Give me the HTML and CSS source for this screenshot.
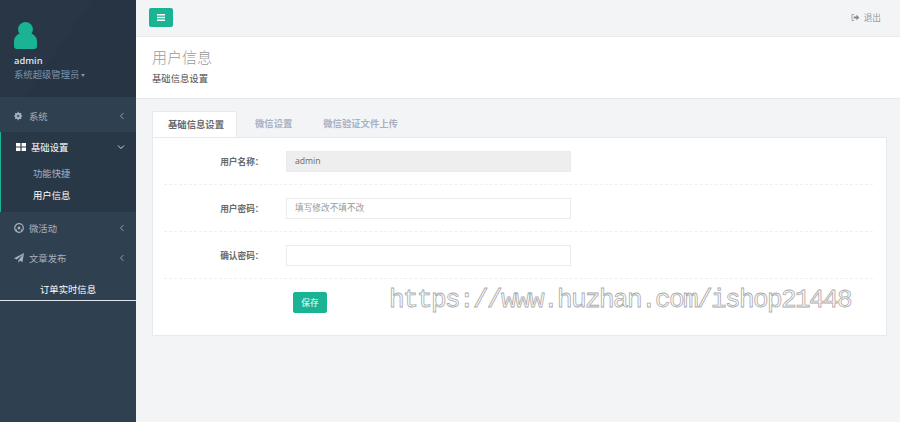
FILE: index.html
```html
<!DOCTYPE html>
<html lang="zh-CN">
<head>
    <meta charset="UTF-8">
    <title>用户信息</title>
    <link rel="stylesheet" href="styles.css">
</head>
<body>
    <div class="layout">
        <!-- 左侧菜单 -->
        <nav class="sidebar">
            <div class="profile">
                <svg class="avatar" viewBox="0 0 23 27" width="23" height="27">
                    <circle cx="11.5" cy="7.400" r="7.400" fill="#1ab394"/>
                    <path d="M0 20c0-4.500 2-7 6-8.500 3 2 8 2 11 0 4 1.500 6 4 6 8.500v4c0 2-1 3-3 3H3c-2 0-3-1-3-3z" fill="#1ab394"/>
                </svg>
                <div class="profile-name">admin</div>
                <div class="profile-role">系统超级管理员<span class="caret"></span></div>
            </div>
            <ul class="menu">
                <li class="menu-item">
                    <svg class="menu-icon" viewBox="0 -1 12 12"><circle cx="5" cy="5" r="2.900" fill="none" stroke="currentColor" stroke-width="2.200"/><path d="M5 0v10M0 5h10M1.500 1.500l7 7M8.500 1.500l-7 7" stroke="currentColor" stroke-width="1.300"/><circle cx="5" cy="5" r="1.300" fill="#2f4050"/></svg>
                    <span class="menu-text">系统</span>
                    <svg class="arrow" viewBox="0 0 6 8"><path d="M4.500 1 1.500 4l3 3" fill="none" stroke="currentColor" stroke-width=".8"/></svg>
                </li>
                <li class="menu-group">
                    <div class="menu-item active">
                        <svg class="menu-icon" viewBox="0 0 10 10"><path d="M0 1h4.400v3.400H0zM5.600 1H10v3.400H5.600zM0 5.600h4.400V9H0zM5.600 5.600H10V9H5.600z" fill="currentColor"/></svg>
                        <span class="menu-text">基础设置</span>
                        <svg class="arrow" viewBox="0 0 8 6"><path d="M1 1.500 4 4.500l3-3" fill="none" stroke="currentColor" stroke-width=".8"/></svg>
                    </div>
                    <a class="sub-item">功能快捷</a>
                    <a class="sub-item current">用户信息</a>
                </li>
                <li class="menu-item">
                    <svg class="menu-icon" viewBox="0 0 10 10"><circle cx="5" cy="5" r="4.300" fill="none" stroke="currentColor" stroke-width="1.200"/><path d="M5 3.300 6.500 4.500 6 6.200H4L3.500 4.500z" fill="currentColor"/><circle cx="2.600" cy="7" r=".8" fill="currentColor"/><circle cx="7.400" cy="7" r=".8" fill="currentColor"/></svg>
                    <span class="menu-text">微活动</span>
                    <svg class="arrow" viewBox="0 0 6 8"><path d="M4.500 1 1.500 4l3 3" fill="none" stroke="currentColor" stroke-width=".8"/></svg>
                </li>
                <li class="menu-item">
                    <svg class="menu-icon" viewBox="0 0 10 10"><path d="M10 0 8.500 9 5.800 7.800 4.300 10V7.500L9 1.500 2.800 6.500 0 5.300z" fill="currentColor"/></svg>
                    <span class="menu-text">文章发布</span>
                    <svg class="arrow" viewBox="0 0 6 8"><path d="M4.500 1 1.500 4l3 3" fill="none" stroke="currentColor" stroke-width=".8"/></svg>
                </li>
                <li class="menu-link">订单实时信息</li>
            </ul>
        </nav>

        <!-- 主体 -->
        <main class="main">
            <div class="topbar">
                <button class="toggle-btn">
                    <svg viewBox="0 0 8 7" width="8" height="7"><path d="M0 0h8v1.400H0zM0 2.800h8v1.400H0zM0 5.600h8V7H0z" fill="#fff"/></svg>
                </button>
                <a class="logout">
                    <svg viewBox="0 0 10 8" width="9" height="7"><path d="M3.500 .5H1v7h2.500" fill="none" stroke="#999"/><path d="M3 2.800h3V.8L9.500 4 6 7.200v-2H3z" fill="#888"/></svg>
                    退出
                </a>
            </div>
            <div class="page-heading">
                <h2>用户信息</h2>
                <p>基础信息设置</p>
            </div>
            <div class="content">
                <ul class="tabs">
                    <li class="tab active">基础信息设置</li>
                    <li class="tab">微信设置</li>
                    <li class="tab">微信验证文件上传</li>
                </ul>
                <form class="panel">
                    <div class="form-row">
                        <label>用户名称：</label>
                        <input class="field" type="text" value="admin" disabled>
                    </div>
                    <div class="form-row">
                        <label>用户密码：</label>
                        <input class="field" type="text" placeholder="填写修改不填不改">
                    </div>
                    <div class="form-row">
                        <label>确认密码：</label>
                        <input class="field" type="text">
                    </div>
                    <div class="form-actions">
                        <button type="button" class="save-btn">保存</button>
                    </div>
                </form>
            </div>
            <div class="watermark">https://www.huzhan.com/ishop21448</div>
        </main>
    </div>
</body>
</html>
```

FILE: styles.css
```css
* {
    margin: 0;
    padding: 0;
    box-sizing: border-box;
}

body {
    font-family: "Open Sans", "Noto Sans CJK SC", sans-serif;
    font-size: 9.330px;
    color: #676a6c;
    background-color: #f3f4f6;
    overflow: hidden;
}

ul {
    list-style: none;
}

.layout {
    display: flex;
    height: 422px;
}

/* 左侧菜单 */
.sidebar {
    width: 136px;
    flex-shrink: 0;
    background-color: #2f4050;
}

.profile {
    height: 97px;
    padding: 22px 0 0 14px;
    background-color: #263444;
    background-image: linear-gradient(125deg, rgba(255, 255, 255, 0.012) 0 45%, transparent 45%);
}

.avatar {
    display: block;
    margin-bottom: 4px;
}

.profile-name {
    color: #dfe4ed;
    font-weight: 600;
    line-height: 15px;
}

.profile-role {
    color: #8095a8;
    line-height: 13px;
}

.caret {
    display: inline-block;
    margin-left: 2px;
    vertical-align: middle;
    border-top: 3px solid #8095a8;
    border-left: 2.500px solid transparent;
    border-right: 2.500px solid transparent;
}

.menu {
    padding-top: 4px;
}

.menu-item {
    display: flex;
    align-items: center;
    height: 30px;
    padding: 0 11px 0 14px;
    color: #a7b1c2;
}

.menu-icon {
    width: 10px;
    height: 10px;
    margin-right: 5px;
}

.menu-text {
    flex: 1;
}

.arrow {
    width: 6px;
    height: 8px;
}

.menu-group {
    height: 80px;
    margin: 1px 0;
    background-color: #293846;
    border-left: 1px solid #1ab394;
}

.menu-item.active {
    margin-bottom: 1px;
    padding-left: 15px;
    color: #fff;
}

.menu-group .arrow {
    width: 8px;
    height: 6px;
}

.sub-item {
    display: block;
    padding-left: 32px;
    line-height: 22px;
    color: #a7b1c2;
}

.sub-item.current {
    color: #fff;
}

.menu-link {
    height: 28px;
    padding-top: 7px;
    line-height: 20px;
    text-align: center;
    color: #fff;
    border-bottom: 1px solid #dfe4ed;
}

/* 主体 */
.main {
    position: relative;
    flex: 1;
    min-width: 0;
}

.topbar {
    display: flex;
    justify-content: space-between;
    align-items: center;
    height: 37px;
    padding: 0 19px 2px 13px;
    border-bottom: 1px solid #e7eaec;
}

.toggle-btn {
    display: flex;
    align-items: center;
    justify-content: center;
    width: 24px;
    height: 19px;
    border: none;
    border-radius: 2px;
    background-color: #1ab394;
}

.logout {
    display: flex;
    align-items: center;
    gap: 4px;
    font-size: 8.670px;
    color: #999c9e;
}

.page-heading {
    height: 62px;
    padding: 9px 16px 0;
    background-color: #fff;
    border-bottom: 1px solid #e7eaec;
}

.page-heading h2 {
    font-size: 15px;
    font-weight: 300;
    line-height: 22px;
    color: #999;
}

.page-heading p {
    margin-top: 3px;
    line-height: 15px;
    color: #4b4d4f;
}

.content {
    padding: 12px 13px 0 16px;
}

.tabs {
    display: flex;
    height: 26px;
}

.tab {
    padding: 0 13px 0 18px;
    line-height: 26px;
    font-weight: 600;
    color: #a7b1c2;
}

.tab.active {
    padding: 0 12px 0 15px;
    color: #676a6c;
    background-color: #fff;
    border: 1px solid #e7eaec;
    border-bottom: none;
    border-radius: 2px 2px 0 0;
}

.panel {
    height: 199px;
    padding: 0 13px 0 11px;
    background-color: #fff;
    border: 1px solid #e7eaec;
}

.form-row {
    display: flex;
    align-items: center;
    height: 47px;
    border-bottom: 1px dashed #f0f0f0;
}

.form-row label {
    width: 99.500px;
    margin-right: 22.500px;
    text-align: right;
    font-size: 8.670px;
    font-weight: 600;
    color: #676a6c;
}

.field {
    width: 285px;
    height: 21px;
    padding: 0 8px;
    border: 1px solid #ebebed;
    background-color: #fff;
    font-family: inherit;
    font-size: 8.670px;
    color: #676a6c;
}

.field:disabled {
    background-color: #eee;
}

.field::placeholder {
    color: #999;
}

.form-actions {
    padding: 13px 0 0 129px;
}

.save-btn {
    width: 34px;
    height: 21px;
    border: 1px solid #1ab394;
    border-radius: 2px;
    background-color: #1ab394;
    color: #fff;
    font-family: inherit;
    font-size: 8.670px;
}

/* 水印 */
.watermark {
    position: absolute;
    left: 253px;
    top: 282px;
    font-family: "Liberation Mono", monospace;
    font-size: 26px;
    letter-spacing: -1.600px;
    line-height: 36px;
    color: #fff;
    -webkit-text-stroke: 0.8px #aaa;
    white-space: nowrap;
    opacity: 0.99;
}
```
